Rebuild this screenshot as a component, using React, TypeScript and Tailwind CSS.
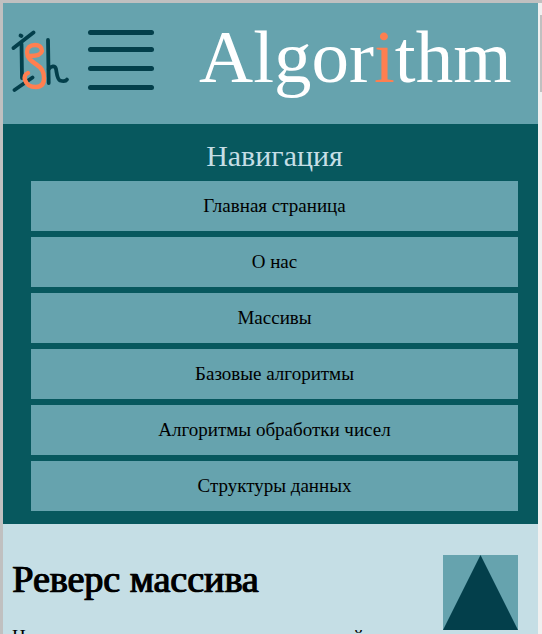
const items = ["Главная страница", "О нас", "Массивы", "Базовые алгоритмы", "Алгоритмы обработки чисел", "Структуры данных"];

function Logo() {
  return (
    <svg width="60" height="62" viewBox="11 30 60 62" className="shrink-0" fill="none" strokeLinecap="round" strokeLinejoin="round">
      <g stroke="#033f4b" strokeWidth="3.8">
        <path d="M13.5 48 L33.5 32.5" />
        <path d="M20.5 35.5 L21.5 36" />
        <path d="M21.5 44 L22 78" />
        <path d="M14.5 90 L32.5 77.5" />
        <path d="M48 40 L48.7 83" />
        <path d="M48.7 69 C51 66 55 65 56 69 C57 74 57 79 60 80.5 C63 81.5 66 81 67 79.5" />
      </g>
      <path d="M30 56 C34 56 41 55 42 51 C42 47 39 45 35 45 C30 45 27 48 27 52 C27 59 33 62 37 65 C42 68 44 72 44 78 C44 84 41 87 36 87 C31 87 27 86 25 80 C24 77 25 74 28 73" stroke="#ff7f50" strokeWidth="4.4" />
    </svg>
  );
}

export default function App() {
  return (
    <div className="h-[634px] w-[542px] overflow-hidden bg-[#c0c0c0] pt-[3px] pl-[3px] font-['Liberation_Serif',serif]">
      <div className="flex h-[631px] w-[539px]">
        <div className="w-[535px] shrink-0">
          <header className="flex h-[121px] items-start bg-[#66a3ae]">
            <div className="mt-[27px] ml-[8px]"><Logo /></div>
            <div className="mt-[27px] ml-[17px] flex w-[66px] shrink-0 flex-col">
              <div className="mb-[12px] h-[5px] rounded-full bg-[#033f4b]" />
              <div className="mb-[14px] h-[5px] rounded-full bg-[#033f4b]" />
              <div className="mb-[14px] h-[5px] rounded-full bg-[#033f4b]" />
              <div className="h-[5px] rounded-full bg-[#033f4b]" />
            </div>
            <h1 className="mt-[11px] ml-[45px] whitespace-nowrap text-[75px] leading-[86px] font-normal text-white">
              Algor<span className="text-[#ff7f50]">i</span>thm
            </h1>
          </header>
          <nav className="flex h-[400px] flex-col bg-[#07585e] pr-[20px] pl-[28px]">
            <h2 className="mt-[14px] h-[43px] text-center text-[30px] leading-[36px] font-normal text-[#c5dee5]">Навигация</h2>
            <ul className="flex flex-col gap-[6px]">
              {items.map((t) => (
                <li key={t} className="flex h-[50px] items-center justify-center bg-[#66a3ae] text-[19px] text-black">{t}</li>
              ))}
            </ul>
          </nav>
          <main className="h-[200px] overflow-hidden bg-[#c5dee5] pt-[31px] pl-[9px]">
            <div className="flex justify-between pr-[20px]">
              <h2 className="mt-[3px] whitespace-nowrap text-[38px] leading-[42px] font-normal text-black [-webkit-text-stroke:0.7px_black] [text-shadow:1px_0_0_#000]">Реверс массива</h2>
              <div className="h-[75px] w-[75px] shrink-0 bg-[#66a3ae]">
                <svg width="75" height="75" viewBox="0 0 75 75"><polygon points="37.5,0 75,75 0,75" fill="#033f4b" /></svg>
              </div>
            </div>
            <p className="mt-[-4px] whitespace-nowrap text-[19px] leading-[22px] text-black">На этом уроке мы напишем метод, который</p>
          </main>
        </div>
        <div className="relative w-[4px] bg-[#f0f0f0]">
          <div className="absolute top-[12px] right-0 h-[77px] w-[2px] bg-[#c0c0c0]" />
        </div>
      </div>
    </div>
  );
}
